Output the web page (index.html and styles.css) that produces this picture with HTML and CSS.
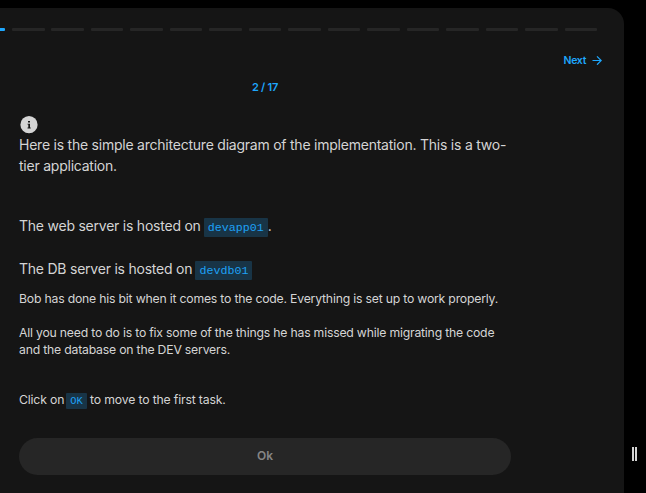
FILE: index.html
```html
<!DOCTYPE html>
<html lang="en">
<head>
<meta charset="utf-8">
<title>Lab task</title>
<link rel="stylesheet" href="styles.css">
</head>
<body>
<main class="panel">
  <div class="progress">
    <span class="step done"></span><span class="step done"></span><span class="step"></span><span class="step"></span><span class="step"></span><span class="step"></span><span class="step"></span><span class="step"></span><span class="step"></span><span class="step"></span><span class="step"></span><span class="step"></span><span class="step"></span><span class="step"></span><span class="step"></span><span class="step"></span><span class="step"></span>
  </div>
  <a class="next">Next
    <svg width="10" height="10" viewBox="0 0 10 10" fill="none" stroke="currentColor" stroke-width="1.2"><path d="M.5 5.5H9M5 1.3L9.2 5.5L5 9.7"/></svg>
  </a>
  <section class="content">
    <div class="count">2 / 17</div>
    <svg class="info" width="18" height="18" viewBox="0 0 18 18"><circle cx="9" cy="8.7" r="8.6" fill="#d4d4d4"/><path d="M8 5h2v1.6H8zM7.5 7.7H10v3.9h.7v.9H7.5v-.9H8.3V8.6h-.8z" fill="#151515"/></svg>
    <p class="lead intro">Here is the simple architecture diagram of the implementation. This is a two-<br>tier application.</p>
    <p class="lead web">The web server is hosted on <code>devapp01</code>.</p>
    <p class="lead db">The DB server is hosted on <code>devdb01</code></p>
    <p class="body bob">Bob has done his bit when it comes to the code. Everything is set up to work properly.</p>
    <p class="body fix">All you need to do is to fix some of the things he has missed while migrating the code<br>and the database on the DEV servers.</p>
    <p class="body click">Click on <code>OK</code> to move to the first task.</p>
    <button class="ok">Ok</button>
  </section>
</main>
<aside class="gutter"><span class="grip"></span></aside>
</body>
</html>
```
FILE: styles.css
```css
* { box-sizing: border-box; }
body {
  margin: 0;
  height: 493px;
  padding-top: 8px;
  display: flex;
  overflow: hidden;
  background: #000;
  color: #d4d4d4;
  font-family: Inter, sans-serif;
}
.panel {
  width: 624px;
  height: 485px;
  background: #151515;
  border-top-right-radius: 16px;
  overflow: hidden;
}
.progress {
  display: flex;
  gap: 6.9px;
  margin: 20px 27px 0 -67px;
}
.step {
  flex: 1;
  height: 3px;
  border-radius: 1px;
  background: #262626;
}
.step.done { background: #1ea7fd; }
.next {
  display: flex;
  align-items: center;
  justify-content: flex-end;
  gap: 6px;
  height: 16px;
  margin: 21px 22px 0 0;
  color: #1ea7fd;
  font-size: 10.5px;
  font-weight: 600;
  letter-spacing: -.35px;
}
.content {
  display: flex;
  flex-direction: column;
  width: 492px;
  margin-left: 19px;
}
.count {
  height: 16px;
  margin-top: 11px;
  line-height: 16px;
  text-align: center;
  color: #1ea7fd;
  font-size: 11px;
  font-weight: 600;
  letter-spacing: -.25px;
}
.info { margin: 21px 0 0 1px; }
p { margin: 0; white-space: nowrap; }
.lead { font-size: 14px; line-height: 21px; letter-spacing: -.23px; }
.body { font-size: 12.25px; line-height: 17px; letter-spacing: -.21px; }
.web { margin-top: 39px; }
.db { margin-top: 22px; }
.bob { margin-top: 11px; }
.fix { margin-top: 17px; }
.click { margin-top: 33px; letter-spacing: -.17px; }
code {
  margin-left: -.5px;
  padding: 3px 4px 2px;
  border-radius: 1px;
  background: #183446;
  color: #1ea1f5;
  font-family: "Liberation Mono", monospace;
  font-size: 11.67px;
  line-height: 1;
  letter-spacing: 0;
}
.click code { margin-left: -1.2px; padding-top: 2px; font-size: 10.4px; }
.ok {
  height: 37px;
  margin-top: 30px;
  padding: 0 0 2px;
  border: 0;
  border-radius: 19px;
  background: #262626;
  color: #858585;
  font: 600 12px Inter, sans-serif;
  letter-spacing: -.1px;
}
.gutter {
  flex: 1;
  display: flex;
  align-items: flex-end;
  padding: 0 0 32px 8px;
}
.grip {
  width: 5px;
  height: 14px;
  border: solid #d4d4d4;
  border-width: 0 2px;
}
```
